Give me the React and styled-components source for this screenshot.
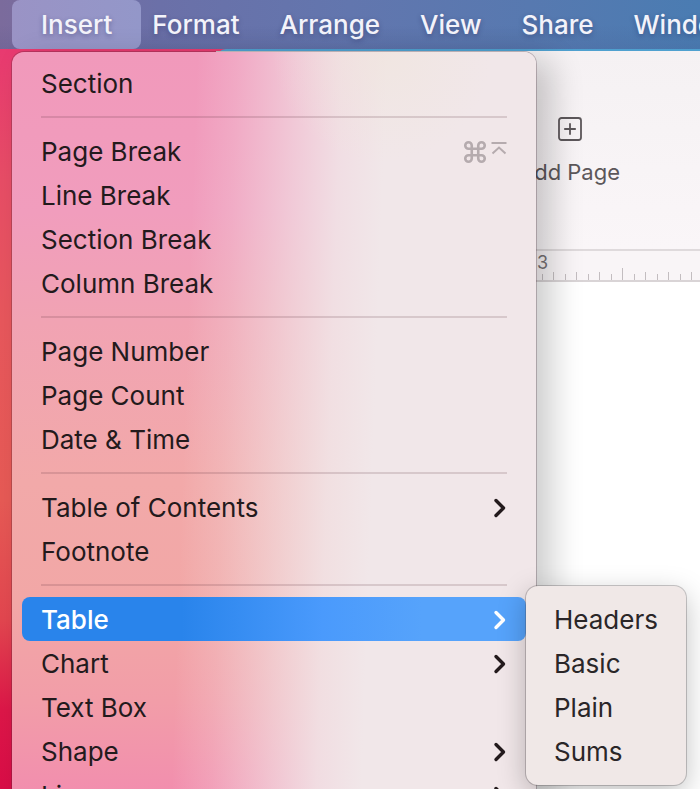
import { Fragment } from "react";
import styled, { createGlobalStyle } from "styled-components";
import { Command } from "lucide-react";

const menuBarItems = ["Insert", "Format", "Arrange", "View", "Share", "Window"];

const insertMenu = [
    [{ label: "Section" }],
    [
        { label: "Page Break", shortcut: true },
        { label: "Line Break" },
        { label: "Section Break" },
        { label: "Column Break" },
    ],
    [{ label: "Page Number" }, { label: "Page Count" }, { label: "Date & Time" }],
    [{ label: "Table of Contents", more: true }, { label: "Footnote" }],
    [
        { label: "Table", more: true, submenu: ["Headers", "Basic", "Plain", "Sums"] },
        { label: "Chart", more: true },
        { label: "Text Box" },
        { label: "Shape", more: true },
        { label: "Line", more: true },
    ],
];

const ticks = [0, 1, 2, 3, 4, 5, 6, 7];

function Chevron() {
    return (
        <svg width="14" height="20" viewBox="0 0 14 20" fill="none" aria-hidden="true">
            <path d="M3 2.5 L10.5 10 L3 17.5" stroke="currentColor" strokeWidth="3.4" strokeLinecap="round" strokeLinejoin="round" />
        </svg>
    );
}

function Shortcut() {
    return (
        <ShortcutStyled>
            <Command size={26} strokeWidth={2.4} />
            <svg width="16" height="20" viewBox="0 0 16 20" fill="none" aria-hidden="true">
                <path d="M0.5 1 H15.5 M1.5 11.5 L8 5.5 L14.5 11.5" stroke="currentColor" strokeWidth="2" />
            </svg>
        </ShortcutStyled>
    );
}

function MenuItem({ label, more, shortcut, submenu }) {
    return (
        <MenuItemStyled>
            <MenuButton $active={Boolean(submenu)} aria-haspopup={more ? "menu" : undefined}>
                {label}
                {shortcut && <Shortcut />}
                {more && <Chevron />}
            </MenuButton>
            {submenu && (
                <Submenu>
                    {submenu.map((name) => (
                        <li key={name}>
                            <SubmenuButton>{name}</SubmenuButton>
                        </li>
                    ))}
                </Submenu>
            )}
        </MenuItemStyled>
    );
}

function DocumentWindow() {
    return (
        <WindowStyled>
            <Toolbar>
                <ToolbarButton>
                    <svg width="24" height="24" viewBox="0 0 24 24" fill="none" stroke="currentColor" aria-hidden="true">
                        <rect x="1" y="1" width="22" height="22" rx="2.5" strokeWidth="1.8" />
                        <path d="M12 6.2 V17.8 M6.2 12 H17.8" strokeWidth="1.8" />
                    </svg>
                    Add Page
                </ToolbarButton>
            </Toolbar>
            <Ruler>
                <HalfInch>
                    <RulerLabel>3</RulerLabel>
                    {ticks.map((n) => <Tick key={n} $height={n === 0 ? 20 : n % 2 ? 6 : 8} />)}
                </HalfInch>
                <HalfInch>
                    {ticks.map((n) => <Tick key={n} $height={n === 0 ? 12 : n % 2 ? 6 : 8} />)}
                </HalfInch>
            </Ruler>
            <Paper />
        </WindowStyled>
    );
}

export default function App() {
    return (
        <Desktop>
            <GlobalStyle />
            <MenuBar>
                {menuBarItems.map((name) => (
                    <MenuBarButton key={name} $open={name === "Insert"}>{name}</MenuBarButton>
                ))}
            </MenuBar>
            <DocumentWindow />
            <Menu>
                {insertMenu.map((group, index) => (
                    <Fragment key={group[0].label}>
                        {index > 0 && <Separator role="separator" />}
                        {group.map((item) => <MenuItem key={item.label} {...item} />)}
                    </Fragment>
                ))}
            </Menu>
        </Desktop>
    );
}

const GlobalStyle = createGlobalStyle`
    * {
        box-sizing: border-box;
    }

    body {
        margin: 0;
        font-family: Inter, "Liberation Sans", sans-serif;
    }

    button {
        border: 0;
        background: none;
        font: inherit;
        color: inherit;
        white-space: nowrap;
    }

    ul {
        margin: 0;
        padding: 0;
        list-style: none;
    }
`;

const Desktop = styled.main`
    position: relative;
    display: flex;
    flex-direction: column;
    height: 100vh;
    overflow: hidden;
    background: linear-gradient(180deg, #e83a70 50px, #e74d66 180px, #e7575c 320px, #e65a55 500px, #e2464f 620px, #dc1748 710px, #d90d47 100%);
`;

const MenuBar = styled.nav`
    display: flex;
    flex-shrink: 0;
    gap: 40px;
    height: 49px;
    padding-left: 41px;
    background:
        linear-gradient(180deg, transparent 50%, rgba(50, 60, 110, 0.1)),
        linear-gradient(90deg, #7b6b9c, #6b70a8 160px, #6276ae 350px, #5779b0 530px, #4a7cb2 100%);
`;

const MenuBarButton = styled.button`
    flex-shrink: 0;
    margin: 0 ${({ $open }) => ($open ? "-29px" : "0")};
    padding: 0 ${({ $open }) => ($open ? "29px" : "0")};
    border-radius: 8px;
    background: ${({ $open }) => ($open ? "linear-gradient(90deg, #9a93c5, #9397c9)" : "none")};
    color: #f3f3fa;
    font-size: 26px;
    font-weight: 500;
    text-shadow: 0 2px 5px rgba(30, 30, 80, 0.35);
`;

const WindowStyled = styled.section`
    display: flex;
    flex: 1;
    flex-direction: column;
    margin-left: 216px;
    border-top: 2px solid #4fa0cf;
    border-top-left-radius: 10px;
    background: #fff;
`;

const Toolbar = styled.div`
    height: 200px;
    padding: 66px 0 0 303px;
    border-bottom: 2px solid #dfdadc;
    background: linear-gradient(180deg, #f5f1f3, #faf6f8);
`;

const ToolbarButton = styled.button`
    display: flex;
    flex-direction: column;
    align-items: center;
    gap: 17px;
    padding: 0;
    color: #5c575a;
    font-size: 22px;
    line-height: 28px;
`;

const Ruler = styled.div`
    display: flex;
    height: 31px;
    padding-left: 314px;
    overflow: hidden;
    border-bottom: 2px solid #d9d4d6;
    background: #f9f5f7;
`;

const HalfInch = styled.div`
    position: relative;
    display: grid;
    flex-shrink: 0;
    grid-template-columns: repeat(8, 1fr);
    align-items: end;
    width: 92px;
`;

const RulerLabel = styled.span`
    position: absolute;
    top: 1px;
    left: 7px;
    color: #777274;
    font-size: 18px;
    line-height: 22px;
`;

const Tick = styled.i`
    height: ${({ $height }) => $height}px;
    border-left: 1px solid #c3bdc0;
`;

const Paper = styled.div`
    flex: 1;
    background: #fff;
`;

const Menu = styled.ul`
    position: absolute;
    top: 52px;
    left: 12px;
    min-width: 524px;
    padding: 9px 0;
    border-radius: 12px;
    background:
        radial-gradient(ellipse 110px 110px at 370px 0, rgba(240, 229, 220, 0.6), transparent),
        linear-gradient(92deg, transparent 185px, rgba(241, 231, 233, 0.2) 225px, rgba(241, 231, 233, 0.6) 285px, rgba(241, 231, 233, 0.88) 330px, #f1e7e9 375px),
        linear-gradient(180deg, #f199bb, #f19dbd 160px, #f1a3b3 270px, #f2a9a9 430px, #f2a7a6 550px, #f29da8 650px, #f28eae 740px);
    box-shadow: 0 0 0 1px rgba(70, 40, 55, 0.28), 16px 8px 32px rgba(0, 0, 0, 0.2);
    color: #231a1c;
    font-size: 26px;
`;

const Separator = styled.li`
    height: 24px;
    margin: 0 29px;
    padding-top: 11px;

    &::before {
        content: "";
        display: block;
        height: 2px;
        background: rgba(90, 50, 60, 0.17);
    }
`;

const MenuItemStyled = styled.li`
    position: relative;
    margin: 0 10px;
`;

const MenuButton = styled.button`
    display: flex;
    align-items: center;
    justify-content: space-between;
    width: 100%;
    height: 44px;
    padding: 1px 19px 0;
    border-radius: 8px;
    background: ${({ $active }) => ($active ? "linear-gradient(90deg, #2984eb, #2984eb 160px, #4a9afc 300px, #56a3fb 400px)" : "none")};
    color: ${({ $active }) => ($active ? "#fff" : "inherit")};
    font-weight: ${({ $active }) => ($active ? 500 : 400)};
`;

const ShortcutStyled = styled.span`
    display: flex;
    align-items: center;
    gap: 3px;
    color: #b5abae;
`;

const Submenu = styled.ul`
    position: absolute;
    top: -11px;
    left: 100%;
    padding: 11px 0 12px;
    border-radius: 12px;
    background: #f0e8e7;
    box-shadow: 0 0 0 1px rgba(70, 60, 65, 0.28), 0 8px 28px rgba(0, 0, 0, 0.25);
`;

const SubmenuButton = styled.button`
    display: flex;
    align-items: center;
    width: 100%;
    height: 44px;
    padding: 1px 28px 0;
    color: #2a2628;
`;
